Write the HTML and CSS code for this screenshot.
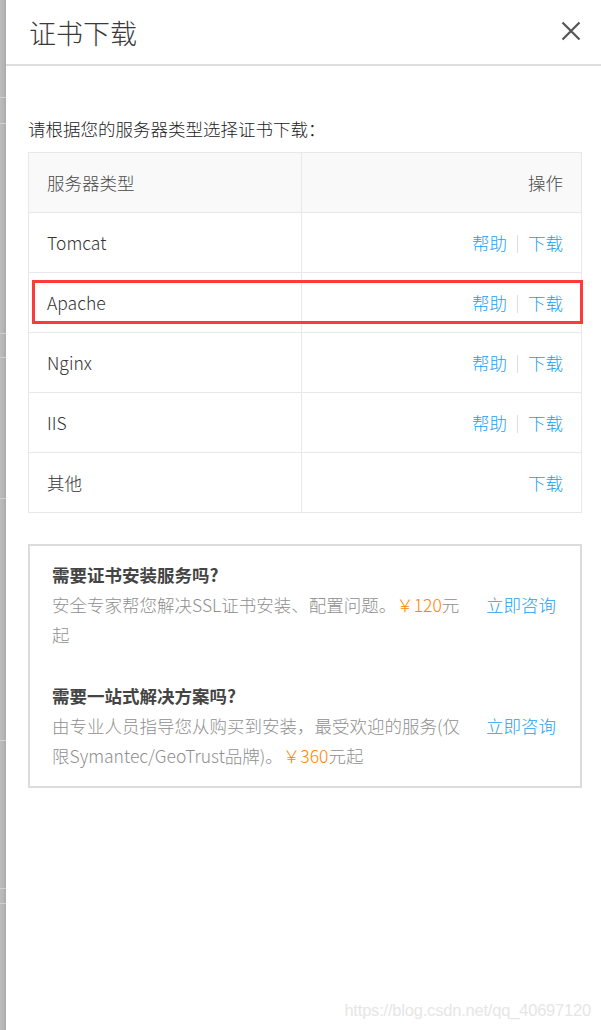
FILE: index.html
```html
<!DOCTYPE html>
<html lang="zh-CN">
<head>
<meta charset="utf-8">
<title>证书下载</title>
<link rel="stylesheet" href="styles.css">
</head>
<body>
<div class="page">
  <div class="backdrop"></div>
  <div class="drawer">
    <header class="drawer-header">
      <h1 class="drawer-title">证书下载</h1>
      <button class="close" aria-label="关闭">
        <svg width="20" height="20" viewBox="0 0 20 20"><path d="M1.5 1.5 L18.5 18.5 M18.5 1.5 L1.5 18.5" stroke="#555" stroke-width="2.2" fill="none"/></svg>
      </button>
    </header>
    <div class="drawer-body">
      <p class="intro">请根据您的服务器类型选择证书下载：</p>
      <div class="table-wrap">
        <table class="server-table">
          <thead>
            <tr><th class="col-type">服务器类型</th><th class="col-op">操作</th></tr>
          </thead>
          <tbody>
            <tr><td>Tomcat</td><td class="col-op"><a class="link">帮助</a><span class="sep"></span><a class="link">下载</a></td></tr>
            <tr><td>Apache</td><td class="col-op"><a class="link">帮助</a><span class="sep"></span><a class="link">下载</a></td></tr>
            <tr><td>Nginx</td><td class="col-op"><a class="link">帮助</a><span class="sep"></span><a class="link">下载</a></td></tr>
            <tr><td>IIS</td><td class="col-op"><a class="link">帮助</a><span class="sep"></span><a class="link">下载</a></td></tr>
            <tr><td>其他</td><td class="col-op"><a class="link">下载</a></td></tr>
          </tbody>
        </table>
        <div class="highlight"></div>
      </div>
      <div class="service-box">
        <div class="service">
          <div class="service-text">
            <div class="service-title">需要证书安装服务吗?</div>
            <p class="service-desc">安全专家帮您解决SSL证书安装、配置问题。<span class="price">￥120</span>元起</p>
          </div>
          <a class="service-link">立即咨询</a>
        </div>
        <div class="service">
          <div class="service-text">
            <div class="service-title">需要一站式解决方案吗?</div>
            <p class="service-desc">由专业人员指导您从购买到安装，最受欢迎的服务(仅限Symantec/GeoTrust品牌)。<span class="price">￥360</span>元起</p>
          </div>
          <a class="service-link">立即咨询</a>
        </div>
      </div>
    </div>
  </div>
</div>
<div class="watermark">https://blog.csdn.net/qq_40697120</div>
</body>
</html>
```

FILE: styles.css
```css
html, body {
  margin: 0;
  padding: 0;
  background: #fff;
}
body {
  font-family: "Noto Sans CJK SC", "Microsoft YaHei", sans-serif;
  font-weight: 300;
  color: #333;
}
.page {
  display: flex;
  min-height: 1030px;
}
.backdrop {
  width: 6px;
  flex: none;
  background:
    linear-gradient(#cfcfcf, #cfcfcf) 0 97px / 100% 1px no-repeat,
    linear-gradient(#cfcfcf, #cfcfcf) 0 123px / 100% 1px no-repeat,
    linear-gradient(#cfcfcf, #cfcfcf) 0 333px / 100% 1px no-repeat,
    linear-gradient(#cfcfcf, #cfcfcf) 0 357px / 100% 1px no-repeat,
    linear-gradient(#cfcfcf, #cfcfcf) 0 498px / 100% 1px no-repeat,
    linear-gradient(#cfcfcf, #cfcfcf) 0 740px / 100% 1px no-repeat,
    linear-gradient(#cfcfcf, #cfcfcf) 0 888px / 100% 1px no-repeat,
    linear-gradient(#cfcfcf, #cfcfcf) 0 903px / 100% 1px no-repeat,
    linear-gradient(to right, #bdbdbd, #b4b4b4 60%, #a9a9a9);
}
.drawer {
  flex: 1;
  display: flex;
  flex-direction: column;
}
.drawer-header {
  height: 64px;
  display: flex;
  align-items: center;
  justify-content: space-between;
  padding: 0 20px 0 23px;
  border-bottom: 2px solid #dedede;
}
.drawer-title {
  margin: 0;
  font-size: 27px;
  font-weight: 300;
  color: #3a3a3a;
  line-height: 1;
  padding-top: 1px;
}
.close {
  border: 0;
  background: none;
  padding: 0;
  width: 22px;
  height: 22px;
  display: flex;
  align-items: center;
  justify-content: center;
  margin-top: -2px;
}
.drawer-body {
  padding: 0 20px 0 22px;
}
.intro {
  margin: 50px 0 10px;
  font-size: 17.5px;
  line-height: 26px;
  color: #222;
}
.table-wrap {
  position: relative;
}
.server-table {
  width: 100%;
  border-collapse: collapse;
  font-size: 17.5px;
  table-layout: fixed;
}
.server-table th,
.server-table td {
  border: 1px solid #e8e8e8;
  height: 59px;
  padding: 0 18px;
  text-align: left;
  font-weight: 300;
  line-height: 24px;
  color: #333;
}
.server-table th {
  background: #f9f9f9;
  color: #4a4a4a;
}
.server-table .col-type {
  width: 273px;
  box-sizing: border-box;
}
.server-table .col-op {
  text-align: right;
}
.link {
  color: #1a9ff2;
  cursor: pointer;
}
.sep {
  display: inline-block;
  width: 1px;
  height: 18px;
  background: #dddddd;
  margin: 0 10px;
  vertical-align: -3px;
}
.highlight {
  position: absolute;
  left: 4px;
  top: 128px;
  width: 551px;
  height: 44px;
  box-sizing: border-box;
  border: 3px solid #ff3a3a;
  pointer-events: none;
}
.service-box {
  margin-top: 31px;
  border: 2px solid #dcdcdc;
  padding: 14px 22px 15px 22px;
  display: flex;
  flex-direction: column;
  gap: 31px;
}
.service {
  display: flex;
  justify-content: space-between;
  align-items: flex-start;
  gap: 16px;
}
.service-text {
  width: 418px;
  flex: none;
}
.service-title {
  font-size: 17.5px;
  font-weight: 700;
  color: #444;
  line-height: 30px;
}
.service-desc {
  margin: 0;
  font-size: 17.5px;
  line-height: 30px;
  color: #8f8f8f;
}
.price {
  color: #ff8500;
}
.service-link {
  margin-top: 30px;
  margin-right: 2px;
  font-size: 17.5px;
  line-height: 30px;
  color: #1a9ff2;
  white-space: nowrap;
  cursor: pointer;
}
.watermark {
  position: absolute;
  right: 10px;
  top: 1001px;
  font-family: "Liberation Sans", Arial, sans-serif;
  font-weight: 400;
  font-size: 16.5px;
  color: #e6e6e6;
  letter-spacing: -0.2px;
}
```
